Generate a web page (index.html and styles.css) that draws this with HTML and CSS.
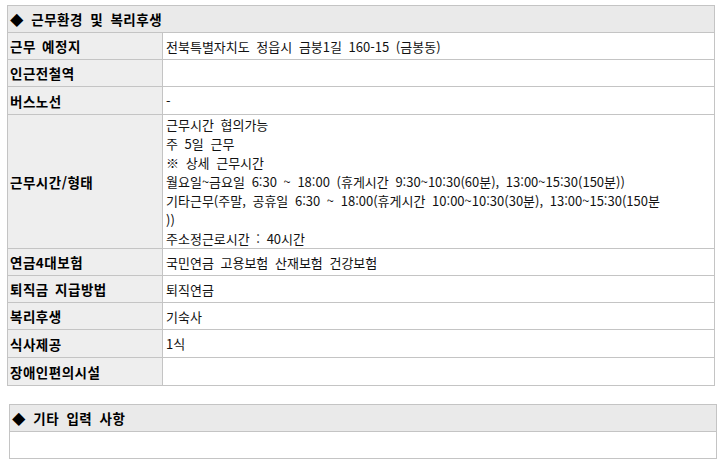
FILE: index.html
```html
<!DOCTYPE html>
<html lang="ko">
<head>
<meta charset="utf-8">
<link rel="stylesheet" href="styles.css">
</head>
<body>
<table class="info">
  <colgroup><col class="c-label"><col></colgroup>
  <tr class="r27"><th class="head" colspan="2">◆ 근무환경 및 복리후생</th></tr>
  <tr class="r27"><th class="label">근무 예정지</th><td class="val">전북특별자치도 정읍시 금붕1길 160-15 (금봉동)</td></tr>
  <tr class="r27"><th class="label">인근전철역</th><td class="val"></td></tr>
  <tr class="r28"><th class="label">버스노선</th><td class="val">-</td></tr>
  <tr><th class="label">근무시간/형태</th><td class="val multi">근무시간 협의가능<br>주 5일 근무<br>※ 상세 근무시간<br>월요일~금요일 6:30 ~ 18:00 (휴게시간 9:30~10:30(60분), 13:00~15:30(150분))<br>기타근무(주말, 공휴일 6:30 ~ 18:00(휴게시간 10:00~10:30(30분), 13:00~15:30(150분<br>))<br>주소정근로시간 : 40시간</td></tr>
  <tr class="r27"><th class="label">연금4대보험</th><td class="val">국민연금 고용보험 산재보험 건강보험</td></tr>
  <tr class="r27"><th class="label">퇴직금 지급방법</th><td class="val">퇴직연금</td></tr>
  <tr class="r27"><th class="label">복리후생</th><td class="val">기숙사</td></tr>
  <tr class="r28"><th class="label">식사제공</th><td class="val">1식</td></tr>
  <tr class="r28"><th class="label">장애인편의시설</th><td class="val"></td></tr>
</table>
<table class="info extra">
  <tr class="r27"><th class="head">◆ 기타 입력 사항</th></tr>
  <tr class="r27"><td class="val"></td></tr>
</table>
</body>
</html>
```
FILE: styles.css
```css
html, body {
  margin: 0;
  padding: 0;
  background: #ffffff;
}
body {
  padding: 5px 0 0 7px;
  font-family: "Noto Sans CJK KR", "Noto Sans", sans-serif;
  font-size: 13px;
  color: #111111;
}
.info {
  border-collapse: collapse;
  width: 708px;
  table-layout: fixed;
}
.c-label {
  width: 155px;
}
.info th, .info td {
  border: 1px solid #c4c4c4;
  padding: 0;
  text-align: left;
  vertical-align: middle;
  white-space: nowrap;
  overflow: hidden;
}
.extra {
  margin-top: 18px;
  margin-left: 2px;
}
.r27 { height: 27px; }
.r28 { height: 28px; }
.head {
  background: #eaeaea;
  font-weight: bold;
  padding-left: 2px !important;
  font-size: 13.5px;
  letter-spacing: 0.5px;
  word-spacing: 3px;
  color: #000;
}
.label {
  background: #eeeeee;
  font-weight: bold;
  padding-left: 2px !important;
  font-size: 13.5px;
  letter-spacing: 0.5px;
  word-spacing: 2px;
  color: #000;
}
.val {
  padding-left: 3px !important;
  line-height: 19px;
  word-spacing: 3px;
}
.multi {
  height: 131px;
  line-height: 19px;
}
```
